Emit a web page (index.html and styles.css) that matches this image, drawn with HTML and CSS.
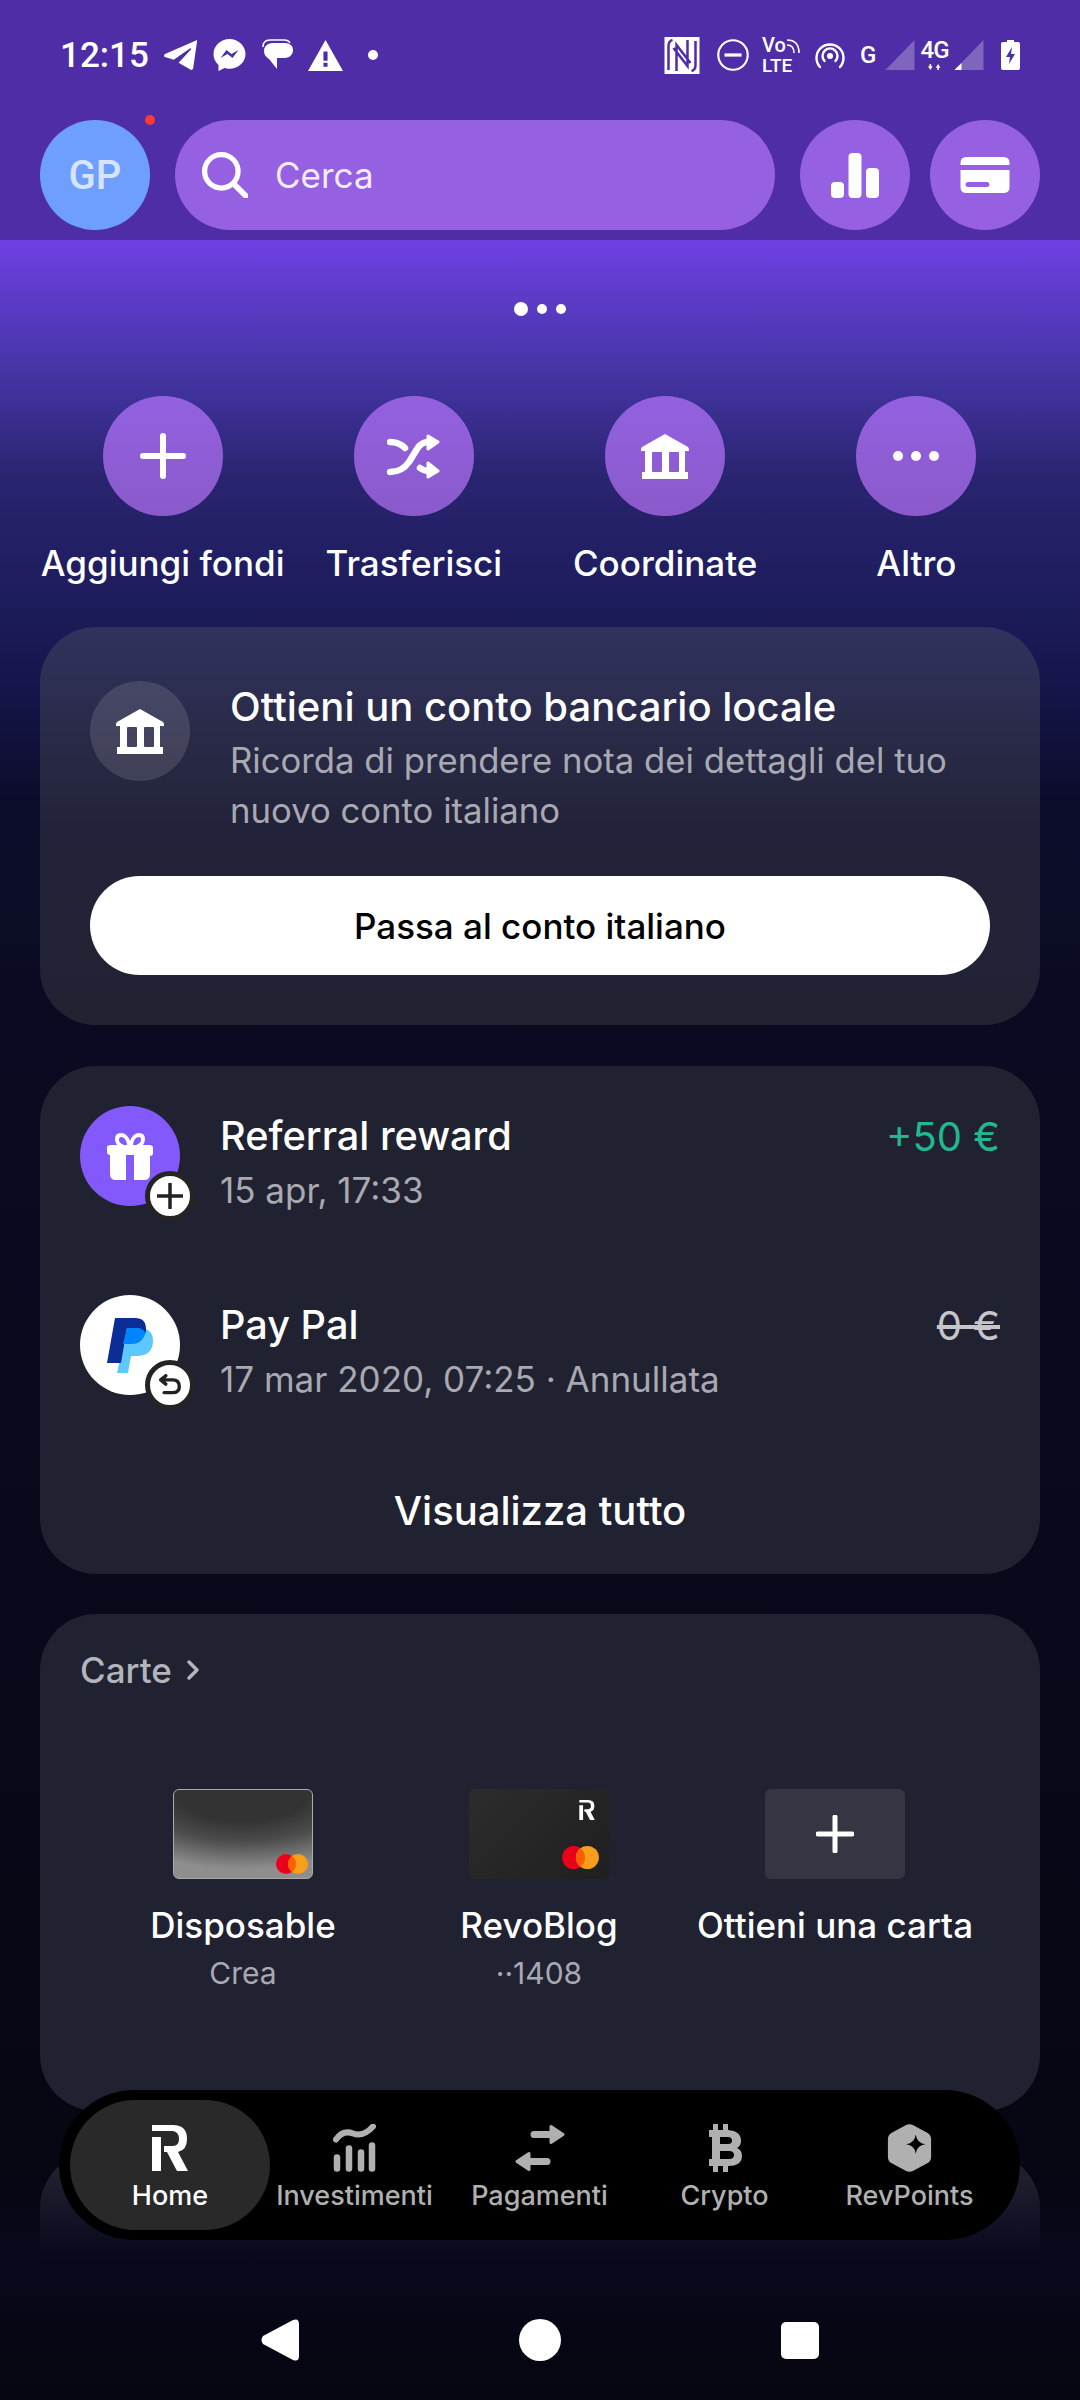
FILE: index.html
```html
<!DOCTYPE html>
<html lang="it">
  <head>
    <meta charset="UTF-8">
    <title>Home</title>
    <link rel="stylesheet" href="styles.css">
  </head>
  <body>
    <div class="phone">

      <header class="top">
        <div class="status">
          <span class="time">12:15</span>
          <svg class="st-telegram" viewBox="0 0 35 32"><path fill="#fff" d="M33 1 1 15q-2 2 0 3l9 3L27 9q1 0 1 1L15 24l12 7q2 1 3-1l4-28q0-2-1-1z"/></svg>
          <svg class="st-messenger" viewBox="0 0 32 32"><path fill="#fff" fill-rule="evenodd" d="M16 0C7 0 0 7 0 15c0 5 2 8 5 11v6l6-3c2 .6 3 .7 5 .7 9 0 16-6.700 16-14.700S25 0 16 0zM7 19l6-8 5 4 7-4-6 8-5-4z"/></svg>
          <svg class="st-chat" viewBox="0 0 31 32"><path fill="none" stroke="#fff" stroke-width="1.500" d="M1 8C1 4 3 1 8 1h14c3 0 5 1 6 3"/><path fill="#fff" d="M11 4h12c5 0 8 3 8 7s-3 8-8 8h-8v11L7 20c-3-2-5-4-5-8 0-5 4-8 9-8z"/></svg>
          <svg class="st-warning" viewBox="0 0 34 30"><path fill="#fff" fill-rule="evenodd" d="M17 0 0 30h34zM15 11h4v9h-4zM15 22h4v4h-4z"/></svg>
          <span class="st-dot"></span>

          <div class="status-right">
            <svg class="st-nfc" viewBox="0 0 35 37"><rect width="35" height="37" fill="#fff"/><path fill="none" stroke="#4f2da7" stroke-width="2.500" d="M8 3q-4 1-4 6v24M12 34V8l14 18M27 34q4-1 4-6V4M23 3v26L9 11"/></svg>
            <svg class="st-dnd" viewBox="0 0 30 30"><circle cx="15" cy="15" r="13.800" fill="none" stroke="#fff" stroke-width="2"/><rect x="7" y="13.500" width="16" height="3" fill="#fff"/></svg>
            <div class="st-volte">
              <span>Vo</span>
              <span>LTE</span>
              <svg viewBox="0 0 14 14"><path fill="none" stroke="#fff" stroke-width="1.600" d="M1 1q12 0 12 13M1 6q7 0 7 8"/></svg>
            </div>
            <svg class="st-hotspot" viewBox="0 0 30 28"><g fill="none" stroke="#fff" stroke-width="2.400" stroke-linecap="round"><path d="M5 26A13.500 13.500 0 1 1 25 26"/><path d="M9.500 20a7.500 7.500 0 1 1 11 0"/></g><circle cx="15" cy="15" r="3" fill="#fff"/></svg>
            <span class="st-g">G</span>
            <svg class="st-signal" viewBox="0 0 29 30"><path fill="#fff" fill-opacity=".27" d="M29 0v30H0z"/></svg>
            <div class="st-4g">
              <span>4G</span>
              <svg viewBox="0 0 18 8"><path fill="#fff" d="M3 8 0 3h2V0h2v3h2zM13 0l3 5h-2v3h-2V5h-2z"/></svg>
            </div>
            <svg class="st-signal" viewBox="0 0 29 30"><path fill="#fff" fill-opacity=".27" d="M29 0v30H0z"/><path fill="#fff" d="M7 23v7H0z"/></svg>
            <svg class="st-battery" viewBox="0 0 19 30"><path fill="#fff" fill-rule="evenodd" d="M6 0h7v2h4q2 0 2 2v24q0 2-2 2H2q-2 0-2-2V4q0-2 2-2h4zM11 7 5 17h4l-1 7 6-10h-4z"/></svg>
          </div>
        </div>

        <div class="toolbar">
          <div class="avatar">GP<span class="avatar-dot"></span></div>
          <div class="search">
            <svg class="search-icon" viewBox="0 0 44 44"><circle cx="18.500" cy="18.500" r="16" fill="none" stroke="#fff" stroke-width="5"/><path d="M31 31 42 42" stroke="#fff" stroke-width="5.500" stroke-linecap="round"/></svg>
            <span>Cerca</span>
          </div>
          <div class="round-btn">
            <svg class="stats-icon" viewBox="0 0 48 45"><rect y="29" width="13" height="16" rx="4" fill="#fff"/><rect x="17.500" width="13" height="45" rx="4" fill="#fff"/><rect x="35" y="15" width="13" height="30" rx="4" fill="#fff"/></svg>
          </div>
          <div class="round-btn">
            <svg class="card-icon" viewBox="0 0 49 36"><path fill="#fff" d="M6 0h37q6 0 6 6v2H0V6q0-6 6-6z"/><path fill="#fff" fill-rule="evenodd" d="M0 13h49v17q0 6-6 6H6q-6 0-6-6zM8 25q-3 0-3 2.500T8 30h18q3 0 3-2.500T26 25z"/></svg>
          </div>
        </div>
      </header>

      <main class="content">
        <div class="pager"><span class="big"></span><span></span><span></span></div>

        <div class="actions">
          <div class="action">
            <div class="action-circle">
              <svg width="46" height="46" viewBox="0 0 46 46"><path d="M23 3v40M3 23h40" stroke="#fff" stroke-width="6" stroke-linecap="round"/></svg>
            </div>
            <span>Aggiungi fondi</span>
          </div>
          <div class="action">
            <div class="action-circle">
              <svg width="53" height="45" viewBox="0 0 53 45"><g fill="none" stroke="#fff" stroke-width="6.500" stroke-linecap="round"><path d="M3 8q9 0 15 6M3 38q12 0 19-10l8-13q4-7 12-7M33 34q4 3 9 3"/></g><path fill="#fff" stroke="#fff" stroke-width="3" stroke-linejoin="round" d="M41 2 51 8 41 15zM41 29l10 8-10 6z"/></svg>
            </div>
            <span>Trasferisci</span>
          </div>
          <div class="action">
            <div class="action-circle">
              <svg width="48" height="45" viewBox="0 0 48 45"><use href="#bank"/></svg>
            </div>
            <span>Coordinate</span>
          </div>
          <div class="action">
            <div class="action-circle">
              <svg width="46" height="10" viewBox="0 0 46 10"><circle cx="5" cy="5" r="5" fill="#fff"/><circle cx="23" cy="5" r="5" fill="#fff"/><circle cx="41" cy="5" r="5" fill="#fff"/></svg>
            </div>
            <span>Altro</span>
          </div>
        </div>

        <section class="card promo">
          <div class="promo-head">
            <div class="promo-icon">
              <svg width="48" height="45" viewBox="0 0 48 45">
                <symbol id="bank" viewBox="0 0 48 45">
                  <path fill="#fff" fill-rule="evenodd" d="M24 0 47 13q1 1 1 3t-2 1h-2v21h3v7H1v-7h3V17H2q-2 1-2-1t1-3zM12 18q-1 0-1 1v18q0 1 1 1h8q1 0 1-1V19q0-1-1-1zM29 18q-1 0-1 1v18q0 1 1 1h8q1 0 1-1V19q0-1-1-1z"/>
                </symbol>
                <use href="#bank"/>
              </svg>
            </div>
            <div>
              <h2 class="promo-title">Ottieni un conto bancario locale</h2>
              <p class="promo-text">Ricorda di prendere nota dei dettagli del tuo nuovo conto italiano</p>
            </div>
          </div>
          <div class="promo-btn">Passa al conto italiano</div>
        </section>

        <section class="card txs">
          <div class="tx">
            <div class="tx-icon tx-gift">
              <svg width="46" height="48" viewBox="0 0 46 48"><path fill="#fff" fill-rule="evenodd" d="M23 9q3-8 9-8 6 0 6 6 0 3-2 6h6q4 0 4 3v5q0 3-3 3v18q0 6-6 6H27V23h-8v25H9q-6 0-6-6V23q-3 0-3-3v-5q0-2 4-2h6q-2-3-2-6 0-6 6-6 6 0 9 8zM14 5q-2 0-2 3t5 5h3q-1-8-6-8zM32 5q-5 0-6 8h3q5-2 5-5t-2-3z"/></svg>
              <span class="tx-badge">
                <svg width="26" height="26" viewBox="0 0 26 26"><path d="M13 1v24M1 13h24" stroke="#222" stroke-width="3.500" stroke-linecap="round"/></svg>
              </span>
            </div>
            <div class="tx-body">
              <div class="tx-name">Referral reward</div>
              <div class="tx-date">15 apr, 17:33</div>
            </div>
            <div class="tx-amount plus">+50 €</div>
          </div>
          <div class="tx">
            <div class="tx-icon tx-paypal">
              <svg width="46" height="55" viewBox="0 0 46 55"><path fill="#5cc8ff" d="M20 10h14q12 1 12 13 0 14-15 15h-7l-3 17H10z"/><path fill="#0a2d96" d="M8 0h20q11 0 11 11 0 2-.5 4H37q-3-5-9-5H20l-6 35H0z"/><path fill="#0085ff" d="M20 10h10q6 0 8.500 5C36 23 31 26 24 26h-8z"/></svg>
              <span class="tx-badge">
                <svg width="22" height="22" viewBox="0 0 26 26"><path fill="none" stroke="#222" stroke-width="4" stroke-linecap="round" stroke-linejoin="round" d="M8 2 2 7l6 5M2 7h14q8 0 8 8 0 7-8 7H6"/></svg>
              </span>
            </div>
            <div class="tx-body">
              <div class="tx-name">Pay Pal</div>
              <div class="tx-date">17 mar 2020, 07:25 · Annullata</div>
            </div>
            <div class="tx-amount void">0 €</div>
          </div>
          <div class="see-all">Visualizza tutto</div>
        </section>

        <section class="card cards">
          <div class="cards-title">Carte
            <svg width="14" height="22" viewBox="0 0 14 22"><path d="M3 3l8 8-8 8" fill="none" stroke="#b4b4bc" stroke-width="3.500" stroke-linecap="round" stroke-linejoin="round"/></svg>
          </div>
          <div class="cards-row">
            <div class="pay-card">
              <div class="thumb thumb-grey">
                <svg class="mc-small" viewBox="0 0 32 20"><use href="#mc"/></svg>
              </div>
              <div class="pay-name">Disposable</div>
              <div class="pay-sub">Crea</div>
            </div>
            <div class="pay-card">
              <div class="thumb thumb-black">
                <svg class="thumb-r" viewBox="0 0 36 46"><use href="#rlogo"/></svg>
                <svg class="mc-big" viewBox="0 0 32 20">
                  <symbol id="mc" viewBox="0 0 32 20">
                    <circle cx="10" cy="10" r="10" fill="#eb001b"/>
                    <circle cx="22" cy="10" r="10" fill="#f79e1b"/>
                    <path fill="#ff5f00" d="M16 2a10 10 0 0 1 0 16 10 10 0 0 1 0-16z"/>
                  </symbol>
                  <use href="#mc"/>
                </svg>
              </div>
              <div class="pay-name">RevoBlog</div>
              <div class="pay-sub">··1408</div>
            </div>
            <div class="pay-card">
              <div class="thumb thumb-add">
                <svg width="38" height="38" viewBox="0 0 38 38"><path d="M19 2v34M2 19h34" stroke="#fff" stroke-width="5" stroke-linecap="round"/></svg>
              </div>
              <div class="pay-name">Ottieni una carta</div>
            </div>
          </div>
        </section>

        <section class="card peek"></section>
      </main>

      <div class="fade"></div>

      <nav class="tabbar">
        <div class="tab active">
          <svg width="36" height="46" viewBox="0 0 36 46">
            <symbol id="rlogo" viewBox="0 0 36 46">
              <path fill="currentColor" d="M0 0h21q14 0 14 14 0 11-9 13l10 19H25L15 27h-3v-6h9q6 0 6-7t-6-8H0zM0 12h9v34H0z"/>
            </symbol>
            <use href="#rlogo"/>
          </svg>
          <span>Home</span>
        </div>
        <div class="tab">
          <svg width="43" height="47" viewBox="0 0 43 47"><g fill="none" stroke="currentColor" stroke-width="6" stroke-linecap="round"><path d="M3 15q7-10 17-6t20-7"/><path stroke-width="6.500" d="M4 33v11M16 24v20M28 28v16M39 21v23"/></g></svg>
          <span>Investimenti</span>
        </div>
        <div class="tab">
          <svg width="50" height="47" viewBox="0 0 50 47"><g fill="currentColor" stroke="currentColor" stroke-width="3" stroke-linejoin="round"><path d="M36 2 48 10 36 18z"/><path d="M14 29 2 37l12 8z"/></g><path stroke="currentColor" stroke-width="7" stroke-linecap="round" d="M19 10h18M14 37h18"/></svg>
          <span>Pagamenti</span>
        </div>
        <div class="tab">
          <svg width="34" height="48" viewBox="0 0 34 48"><path fill="currentColor" fill-rule="evenodd" d="M5 0h5v6h5V0h5v6q13 1 13 11 0 5-4 7 5 2 5 8 0 10-14 10v6h-5v-6h-5v6H5v-6H1v-7h3V13H1V6h4zM12 13v7h8q4 0 4-3.500T20 13zM12 27v8h9q5 0 5-4t-5-4z"/></svg>
          <span>Crypto</span>
        </div>
        <div class="tab">
          <svg width="45" height="50" viewBox="0 0 45 50"><path fill="currentColor" fill-rule="evenodd" d="M19 1q3.500-1.500 7 0l15 8q4 2 4 7v18q0 5-4 7l-15 8q-3.500 1.500-7 0L4 41q-4-2-4-7V16q0-5 4-7zM29 11q-1 9-10 10 9 1 10 10 1-9 10-10-9-1-10-10z"/></svg>
          <span>RevPoints</span>
        </div>
      </nav>

      <div class="sysnav">
        <svg width="38" height="42" viewBox="0 0 38 42"><path fill="#fff" d="M2 25q-3-4 0-8L32 1q6-2 6 4v32q0 6-6 4z"/></svg>
        <span class="sys-home"></span>
        <span class="sys-recent"></span>
      </div>

    </div>
  </body>
</html>
```

FILE: styles.css
```css
* {
  box-sizing: border-box;
}
html, body {
  margin: 0;
  padding: 0;
}
body {
  font-family: Inter, "Noto Sans", sans-serif;
  color: #fff;
  background: #05060f;
}
.phone {
  position: relative;
  width: 1080px;
  height: 2400px;
  overflow: hidden;
  background: linear-gradient(180deg, #6f40e2 240px, #4535a6 370px, #29246f 480px, #1d1c5c 600px, #15154a 690px, #0b0c2a 800px, #0a0b22 1000px, #05060f 2400px);
}

/* top bar */
.top {
  height: 240px;
  background: #4f2da7;
}
.status {
  display: flex;
  align-items: center;
  height: 120px;
  padding: 0 60px 10px 60px;
}
.status svg {
  display: block;
  flex: none;
}
.time {
  width: 104px;
  font-family: Roboto, sans-serif;
  font-weight: 500;
  font-size: 35px;
}
.st-telegram { width: 34px; height: 32px; margin-right: 15px; }
.st-messenger { width: 33px; height: 32px; margin-right: 16px; }
.st-chat { width: 31px; height: 32px; margin-right: 15px; }
.st-warning { width: 35px; height: 31px; }
.st-dot {
  width: 10px;
  height: 10px;
  margin-left: 25px;
  border-radius: 50%;
  background: #fff;
}
.status-right {
  display: flex;
  align-items: center;
  margin-left: auto;
}
.st-nfc { width: 36px; height: 37px; margin-right: 17px; }
.st-dnd { width: 32px; height: 32px; margin-right: 13px; }
.st-volte {
  position: relative;
  width: 38px;
  height: 38px;
  margin-right: 14px;
  font-family: Roboto, sans-serif;
  font-weight: 500;
  font-size: 20px;
  line-height: 18px;
}
.st-volte span {
  display: block;
}
.st-volte span + span {
  margin-top: 3px;
  font-size: 19px;
}
.st-volte svg {
  position: absolute;
  top: 3px;
  right: 0;
  width: 14px;
  height: 14px;
}
.st-hotspot { width: 32px; height: 28px; margin-right: 14px; }
.st-g {
  width: 25px;
  font-family: Roboto, sans-serif;
  font-weight: 500;
  font-size: 24px;
}
.st-signal { width: 30px; height: 30px; }
.st-4g {
  width: 29px;
  margin: 0 5px;
  font-family: Roboto, sans-serif;
  font-weight: 500;
  font-size: 24px;
  line-height: 23px;
  text-align: center;
}
.st-4g span {
  display: block;
  letter-spacing: -1px;
}
.st-4g svg {
  width: 14px;
  height: 8px;
  margin: 1px auto 0;
}
.st-battery { width: 19px; height: 30px; margin-left: 17px; }

.toolbar {
  display: flex;
  align-items: center;
  gap: 25px;
  padding: 0 40px;
}
.avatar {
  position: relative;
  display: flex;
  flex: none;
  align-items: center;
  justify-content: center;
  width: 110px;
  height: 110px;
  border-radius: 50%;
  background: #6e9fff;
  color: #d6e4ff;
  font-family: Roboto, sans-serif;
  font-weight: 500;
  font-size: 40px;
}
.avatar-dot {
  position: absolute;
  top: -5px;
  right: -5px;
  width: 10px;
  height: 10px;
  border-radius: 50%;
  background: #ff3b30;
}
.search {
  display: flex;
  flex: 1;
  align-items: center;
  height: 110px;
  padding-left: 27px;
  border-radius: 55px;
  background: #9560e2;
  font-size: 35px;
  color: #f3ecff;
}
.search-icon {
  width: 46px;
  height: 46px;
  margin-right: 27px;
}
.round-btn {
  display: flex;
  flex: none;
  align-items: center;
  justify-content: center;
  width: 110px;
  height: 110px;
  border-radius: 50%;
  background: #9560e2;
}
.round-btn + .round-btn {
  margin-left: -5px;
}
.stats-icon { width: 48px; height: 45px; }
.card-icon { width: 50px; height: 36px; }

/* content */
.content {
  padding: 0 40px;
}
.pager {
  display: flex;
  align-items: center;
  justify-content: center;
  gap: 9px;
  height: 20px;
  margin-top: 59px;
}
.pager span {
  width: 10px;
  height: 10px;
  border-radius: 50%;
  background: #fff;
}
.pager .big {
  width: 14px;
  height: 14px;
}
.actions {
  display: grid;
  grid-template-columns: repeat(4, 1fr);
  margin: 77px -2px 0 -3px;
}
.action {
  display: flex;
  flex-direction: column;
  align-items: center;
  font-weight: 500;
  font-size: 35px;
  white-space: nowrap;
}
.action-circle {
  display: flex;
  align-items: center;
  justify-content: center;
  width: 120px;
  height: 120px;
  margin-bottom: 26px;
  border-radius: 50%;
  background: linear-gradient(180deg, #9361e0, #8a5acb);
}
.action svg {
  display: block;
}

.card {
  margin-top: 41px;
  border-radius: 56px;
  background: #212231;
}
.promo {
  height: 398px;
  margin-top: 43px;
  padding: 54px 50px 0;
  background: linear-gradient(180deg, #31325e 0, #2a2b49 25%, #22233a 50%, #212231 100%);
}
.promo-head {
  display: flex;
  gap: 40px;
}
.promo-icon {
  display: flex;
  flex: none;
  align-items: center;
  justify-content: center;
  width: 100px;
  height: 100px;
  border-radius: 50%;
  background: rgba(255, 255, 255, .12);
}
.promo-title {
  margin: 1px 0 3px;
  font-weight: 500;
  font-size: 40px;
  line-height: 50px;
}
.promo-text {
  margin: 0;
  font-size: 34.700px;
  line-height: 50px;
  color: #a9a9b2;
}
.promo-btn {
  display: flex;
  align-items: center;
  justify-content: center;
  height: 99px;
  margin-top: 41px;
  border-radius: 50px;
  background: #fff;
  color: #000;
  font-weight: 500;
  font-size: 35px;
}

.txs {
  height: 508px;
  padding: 40px 40px 0;
}
.tx {
  display: flex;
  height: 189px;
}
.tx-icon {
  position: relative;
  display: flex;
  flex: none;
  align-items: center;
  justify-content: center;
  width: 100px;
  height: 100px;
  border-radius: 50%;
}
.tx-gift { background: #8359fb; }
.tx-paypal { background: #fff; }
.tx-badge {
  position: absolute;
  top: 65px;
  left: 65px;
  display: flex;
  align-items: center;
  justify-content: center;
  width: 50px;
  height: 50px;
  border: 5px solid #242424;
  border-radius: 50%;
  background: #fff;
}
.tx-body {
  flex: 1;
  margin-left: 40px;
}
.tx-name {
  margin-top: 2px;
  font-weight: 500;
  font-size: 39.700px;
  line-height: 57px;
}
.tx-date {
  font-size: 35px;
  line-height: 50px;
  color: #a9a9b2;
}
.tx-amount {
  margin-top: 2px;
  font-size: 40px;
  line-height: 58px;
}
.plus { color: #22b88f; }
.void {
  color: #c5c5cc;
  text-decoration: line-through;
}
.see-all {
  margin-top: 2px;
  text-align: center;
  font-weight: 500;
  font-size: 40px;
  line-height: 50px;
}

.cards {
  height: 497px;
  margin-top: 40px;
  padding: 37px 40px 0;
}
.cards-title {
  display: flex;
  align-items: center;
  gap: 14px;
  font-weight: 500;
  font-size: 35px;
  line-height: 38px;
  color: #b4b4bc;
}
.cards-row {
  display: grid;
  grid-template-columns: 296px 296px 296px;
  margin: 100px 0 0 15px;
}
.pay-card {
  display: flex;
  flex-direction: column;
  align-items: center;
  white-space: nowrap;
}
.thumb {
  position: relative;
  display: flex;
  align-items: center;
  justify-content: center;
  width: 140px;
  height: 90px;
  margin-bottom: 22px;
  border-radius: 6px;
}
.thumb-grey {
  border: 1px solid #aaa;
  background: radial-gradient(120% 90% at 50% 0, #333 40%, #4c4c4c 65%, #8e8e8e 100%);
}
.thumb-black {
  background: linear-gradient(135deg, #2c2c2c, #1f1f1f);
}
.thumb-add {
  background: #353644;
}
.mc-small {
  position: absolute;
  right: 4px;
  bottom: 4px;
  width: 32px;
  height: 20px;
}
.mc-big {
  position: absolute;
  right: 10px;
  bottom: 10px;
  width: 37px;
  height: 23px;
}
.thumb-r {
  position: absolute;
  top: 11px;
  right: 14px;
  width: 16px;
  height: 20px;
  color: #fff;
}
.pay-name {
  font-weight: 500;
  font-size: 35px;
  line-height: 48px;
}
.pay-sub {
  font-size: 30px;
  line-height: 48px;
  color: #a9a9b2;
}
.peek {
  height: 300px;
}

/* bottom overlays */
.fade {
  position: absolute;
  left: 0;
  right: 0;
  top: 2165px;
  height: 235px;
  background: linear-gradient(180deg, rgba(7, 8, 26, 0), #07081a 95px, #05060f 100%);
}
.tabbar {
  position: absolute;
  left: 59px;
  top: 2090px;
  display: flex;
  width: 961px;
  height: 150px;
  padding: 10px 18px 10px 11px;
  border-radius: 75px;
  background: #000;
}
.tab {
  display: flex;
  flex: none;
  flex-direction: column;
  align-items: center;
  width: 185px;
  padding-top: 24px;
  color: #b0b0b0;
  font-weight: 500;
  font-size: 27px;
  white-space: nowrap;
}
.tab svg {
  display: block;
  height: 48px;
  margin-bottom: 7px;
}
.tab.active {
  width: 200px;
  margin-right: -8px;
  border-radius: 65px;
  background: #292929;
  color: #fff;
}
.sysnav {
  position: absolute;
  left: 261px;
  top: 2319px;
  display: flex;
  align-items: center;
  gap: 220px;
  height: 42px;
}
.sys-home {
  width: 42px;
  height: 42px;
  border-radius: 50%;
  background: #fff;
}
.sys-recent {
  width: 38px;
  height: 37px;
  border-radius: 5px;
  background: #fff;
}
```
